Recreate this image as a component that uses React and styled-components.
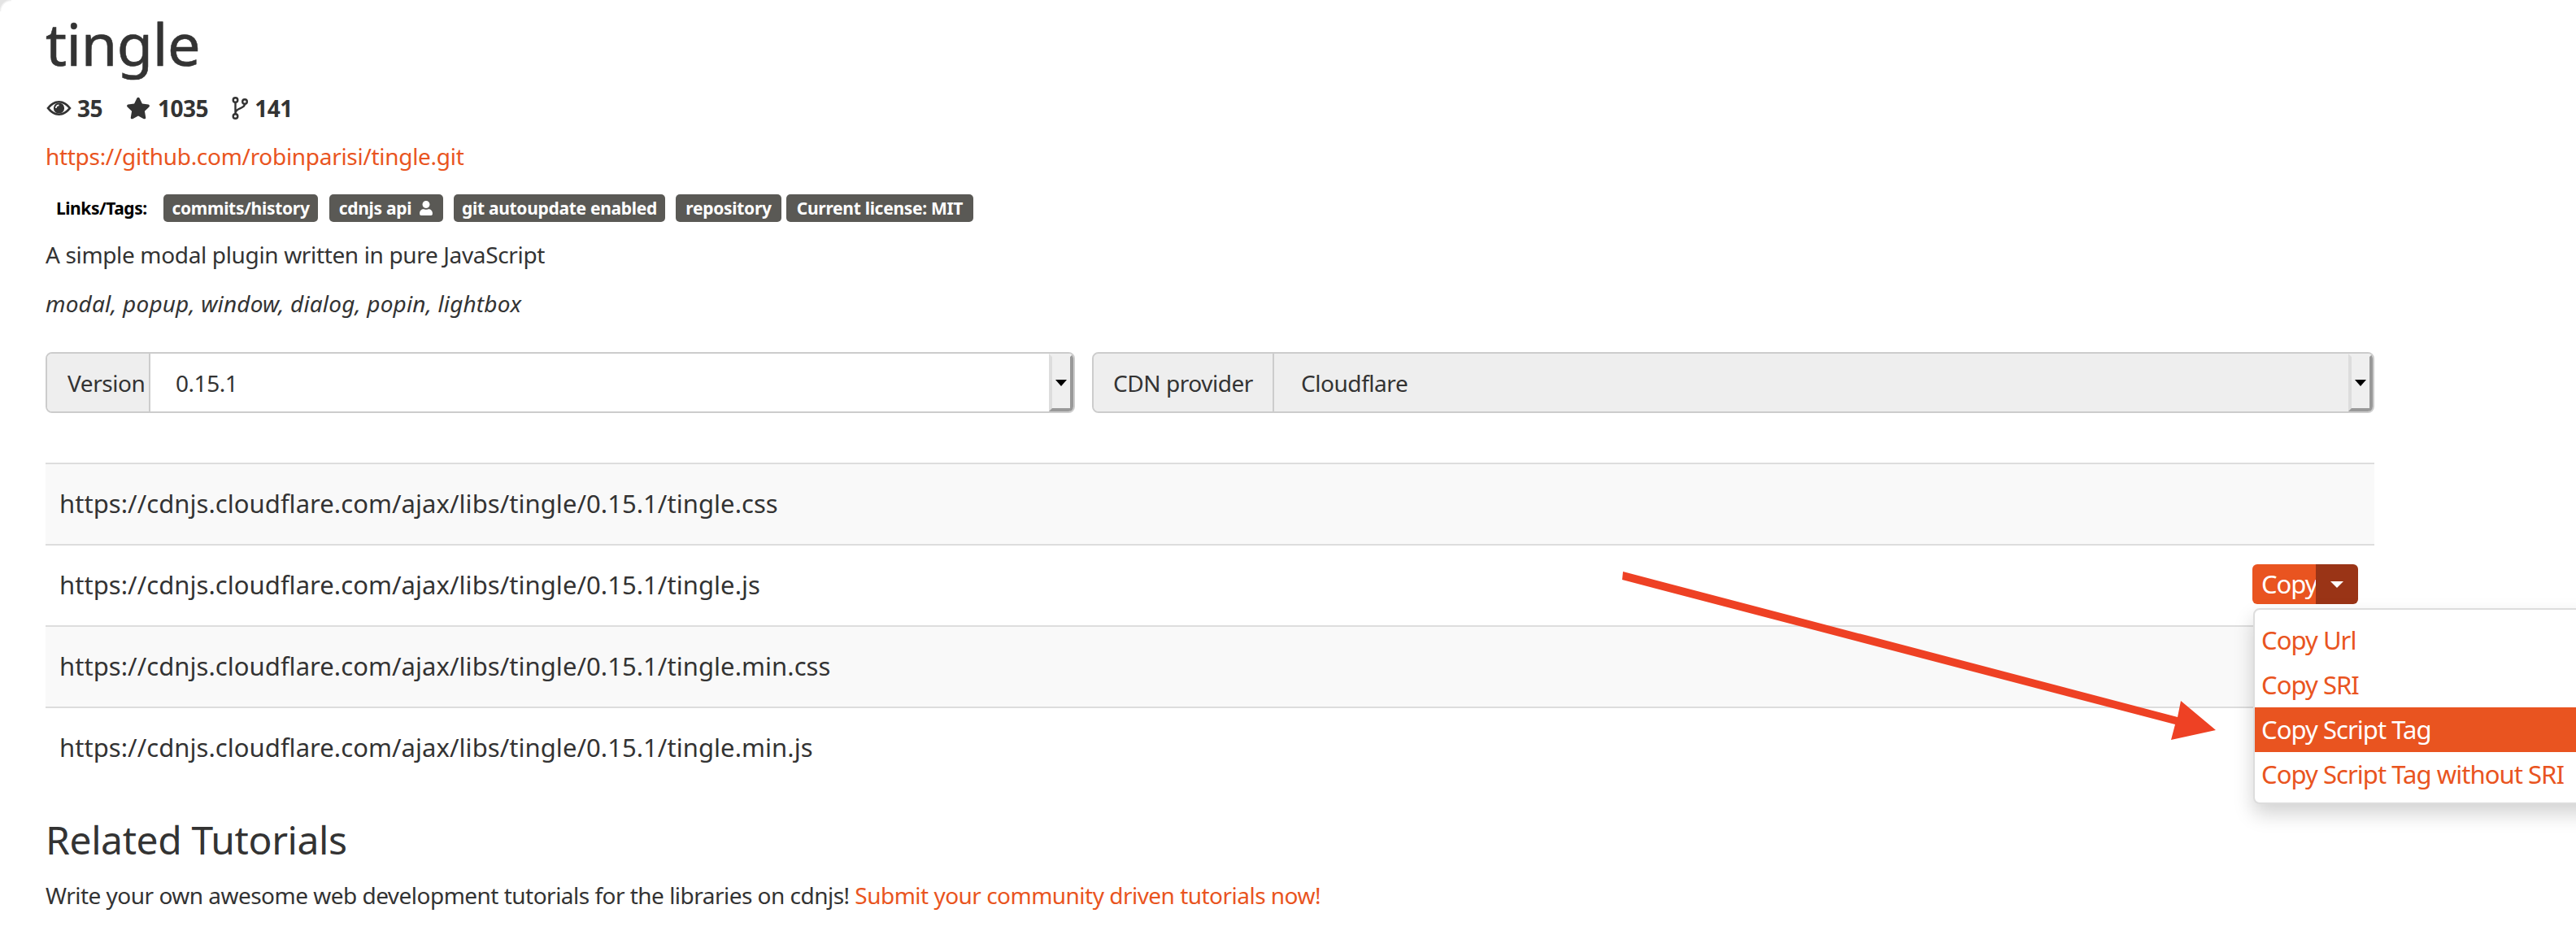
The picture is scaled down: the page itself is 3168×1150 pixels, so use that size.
import React from 'react';
import styled, { createGlobalStyle } from 'styled-components';
import { FaStar, FaUser } from 'react-icons/fa';

const orange = '#e95420';
const fontStack = '"Noto Sans", "Open Sans", sans-serif';

const GlobalStyle = createGlobalStyle`
  html, body {
    margin: 0;
    padding: 0;
    background: #fff;
  }
  body {
    font-family: ${fontStack};
    font-size: 28px;
    letter-spacing: -0.45px;
    color: #333;
    overflow: hidden;
  }
`;

const Page = styled.div`
  position: relative;
  width: 3168px;
  height: 1150px;
  padding-left: 56px;
  box-sizing: border-box;
  overflow: hidden;
`;

const Content = styled.div`
  width: 2864px;
`;

const Corner = styled.div`
  position: absolute;
  top: 0;
  left: 0;
  width: 14px;
  height: 14px;
  background: radial-gradient(circle at 100% 100%, transparent 12px, #e4e4e4 15px);
`;

const Title = styled.h1`
  margin: 0;
  height: 113px;
  font-size: 72px;
  line-height: 107px;
  font-weight: 400;
  letter-spacing: -0.4px;
  -webkit-text-stroke: 0.6px #333;
`;

const Stats = styled.div`
  display: flex;
  align-items: center;
  height: 40px;
  padding-left: 1px;
  font-weight: 700;
  font-size: 28px;
  letter-spacing: -0.5px;
`;

const Stat = styled.span`
  display: inline-flex;
  align-items: center;
  gap: ${(p) => p.$gap}px;
  margin-right: 29px;
  color: #333;
`;

const RepoLink = styled.a`
  display: block;
  margin-top: 20px;
  height: 40px;
  line-height: 38px;
  color: ${orange};
  letter-spacing: -0.3px;
  text-decoration: none;
`;

const Tags = styled.div`
  display: flex;
  align-items: center;
  height: 34px;
  margin-top: 26px;
`;

const TagsLabel = styled.span`
  width: 132px;
  margin-left: 13px;
  font-size: 21px;
  font-weight: 700;
  color: #000;
`;

const Badge = styled.span`
  display: inline-flex;
  align-items: center;
  justify-content: center;
  gap: 9px;
  box-sizing: border-box;
  width: ${(p) => p.$w}px;
  height: 34px;
  margin-right: ${(p) => p.$gap}px;
  background: #5a5955;
  border-radius: 5px;
  color: #fff;
  font-size: 21px;
  font-weight: 700;
  letter-spacing: -0.3px;
  white-space: nowrap;

  svg {
    width: 18px;
    height: 18px;
  }
`;

const Text = styled.p`
  margin: ${(p) => p.$top}px 0 0;
  height: 40px;
  line-height: 40px;
  font-style: ${(p) => (p.$italic ? 'italic' : 'normal')};
  letter-spacing: ${(p) => p.$track}px;
`;

const Selects = styled.div`
  display: grid;
  grid-template-columns: 1266px 1577px;
  gap: 21px;
  margin-top: 40px;
`;

const SelectGroup = styled.div`
  display: flex;
  height: 75px;
  box-sizing: border-box;
  border: 2px solid #ccc;
  border-radius: 8px;
  overflow: hidden;
  background: ${(p) => (p.$disabled ? '#eee' : '#fff')};
`;

const Addon = styled.div`
  box-sizing: border-box;
  width: ${(p) => p.$w}px;
  padding-left: ${(p) => p.$pad}px;
  background: #eee;
  border-right: 2px solid #ccc;
  line-height: 72px;
  white-space: nowrap;
`;

const SelectValue = styled.div`
  flex: 1;
  padding-left: ${(p) => p.$pad}px;
  line-height: 72px;
`;

const SelectArrow = styled.div`
  display: flex;
  align-items: center;
  justify-content: center;
  box-sizing: border-box;
  width: 30px;
  background: #efefef;
  border-style: solid;
  border-width: 4px;
  border-color: #efefef #999 #999 #ddd;

  &::after {
    content: '';
    border-style: solid;
    border-width: 8px 7px 0;
    border-color: #000 transparent transparent;
  }
`;

const Files = styled.div`
  margin-top: 61px;
`;

const FileRow = styled.div`
  box-sizing: border-box;
  height: 100px;
  padding-left: 17px;
  border-top: 2px solid #ddd;
  background: ${(p) => (p.$striped ? '#f9f9f9' : '#fff')};
  font-size: 31px;
  letter-spacing: 0.05px;
  line-height: 96px;
  white-space: nowrap;
`;

const CopyGroup = styled.div`
  position: absolute;
  top: 694px;
  left: 2770px;
  display: flex;
  width: 130px;
  height: 49px;
  border-radius: 6px;
  overflow: hidden;
  color: #fff;
  font-size: 31px;
  letter-spacing: -1px;
  line-height: 48px;
`;

const CopyLabel = styled.div`
  box-sizing: border-box;
  width: 78px;
  padding-left: 11px;
  background: ${orange};
`;

const CopyCaret = styled.div`
  flex: 1;
  display: flex;
  align-items: center;
  justify-content: center;
  background: #9a3416;

  &::after {
    content: '';
    border-style: solid;
    border-width: 8px 8px 0;
    border-color: #fff transparent transparent;
  }
`;

const Menu = styled.ul`
  position: absolute;
  top: 748px;
  left: 2771px;
  width: 500px;
  height: 241px;
  box-sizing: border-box;
  margin: 0;
  padding: 10px 0;
  list-style: none;
  background: #fff;
  border: 2px solid #ddd;
  border-radius: 8px;
  box-shadow: 0 12px 24px rgba(0, 0, 0, 0.175);
`;

const MenuItem = styled.li`
  height: 55px;
  padding-left: 8px;
  font-size: 31px;
  letter-spacing: -0.95px;
  line-height: 55px;
  color: ${(p) => (p.$active ? '#fff' : orange)};
  background: ${(p) => (p.$active ? orange : 'transparent')};
  white-space: nowrap;
`;

const Arrow = styled.svg`
  position: absolute;
  top: 0;
  left: 0;
  pointer-events: none;
`;

const Heading = styled.h2`
  margin: 37px 0 0;
  height: 53px;
  font-size: 48px;
  letter-spacing: -0.4px;
  line-height: 53px;
  font-weight: 400;
`;

const Link = styled.a`
  color: ${orange};
  text-decoration: none;
`;

const EyeIcon = () => (
  <svg width="31" height="18" viewBox="0 0 31 18">
    <path
      fill="#333"
      fillRule="evenodd"
      d="M0.3 9C5 3 10 0 15.5 0S26 3 30.7 9C26 15 21 18 15.5 18S5 15 0.3 9ZM3.8 9C7.5 13.2 11.2 15.4 15.5 15.4S23.5 13.2 27.2 9C23.5 4.8 19.8 2.6 15.5 2.6S7.5 4.8 3.8 9Z"
    />
    <circle cx="15.5" cy="9" r="6.6" fill="#333" />
    <path d="M11 9A4.5 4.5 0 0 1 15.5 4.5V6.2A2.8 2.8 0 0 0 12.7 9Z" fill="#fff" />
  </svg>
);

const BranchIcon = () => (
  <svg width="20" height="28" viewBox="0 0 20 28" fill="none" stroke="#333" strokeWidth="2.4">
    <circle cx="4.5" cy="4" r="2.8" />
    <circle cx="4.5" cy="24" r="2.8" />
    <circle cx="16" cy="6" r="2.8" />
    <path d="M4.5 7V21M16 9C16 15 5 13 4.5 20" />
  </svg>
);

const urls = ['tingle.css', 'tingle.js', 'tingle.min.css', 'tingle.min.js'];
const menu = ['Copy Url', 'Copy SRI', 'Copy Script Tag', 'Copy Script Tag without SRI'];

export default function App() {
  return (
    <Page>
      <GlobalStyle />
      <Corner />
      <Content>
        <Title>tingle</Title>
        <Stats>
          <Stat $gap={7}><EyeIcon />35</Stat>
          <Stat $gap={9}><FaStar size={30} />1035</Stat>
          <Stat $gap={8}><BranchIcon />141</Stat>
        </Stats>
        <RepoLink href="#">https://github.com/robinparisi/tingle.git</RepoLink>
        <Tags>
          <TagsLabel>Links/Tags:</TagsLabel>
          <Badge $w={190} $gap={14}>commits/history</Badge>
          <Badge $w={140} $gap={13}>cdnjs api <FaUser /></Badge>
          <Badge $w={260} $gap={13}>git autoupdate enabled</Badge>
          <Badge $w={130} $gap={6}>repository</Badge>
          <Badge $w={230} $gap={0}>Current license: MIT</Badge>
        </Tags>
        <Text $top={20} $track={-0.35}>A simple modal plugin written in pure JavaScript</Text>
        <Text $top={20} $track={0.15} $italic>modal, popup, window, dialog, popin, lightbox</Text>
        <Selects>
          <SelectGroup>
            <Addon $w={127} $pad={25}>Version</Addon>
            <SelectValue $pad={31}>0.15.1</SelectValue>
            <SelectArrow />
          </SelectGroup>
          <SelectGroup $disabled>
            <Addon $w={222} $pad={24}>CDN provider</Addon>
            <SelectValue $pad={33}>Cloudflare</SelectValue>
            <SelectArrow />
          </SelectGroup>
        </Selects>
        <Files>
          {urls.map((name, i) => (
            <FileRow key={name} $striped={i % 2 === 0}>
              https://cdnjs.cloudflare.com/ajax/libs/tingle/0.15.1/{name}
            </FileRow>
          ))}
        </Files>
        <Heading>Related Tutorials</Heading>
        <Text $top={22} $track={-0.52}>
          Write your own awesome web development tutorials for the libraries on cdnjs!{' '}
          <Link href="#">Submit your community driven tutorials now!</Link>
        </Text>
      </Content>
      <CopyGroup>
        <CopyLabel>Copy</CopyLabel>
        <CopyCaret />
      </CopyGroup>
      <Menu>
        {menu.map((item, i) => (
          <MenuItem key={item} $active={i === 2}>{item}</MenuItem>
        ))}
      </Menu>
      <Arrow width="3168" height="1150" viewBox="0 0 3168 1150">
        <polygon fill="#ee4124" points="1996,703 2678,882 2682,862 2725,898 2670,910 2675,891 1995,713" />
      </Arrow>
    </Page>
  );
}
